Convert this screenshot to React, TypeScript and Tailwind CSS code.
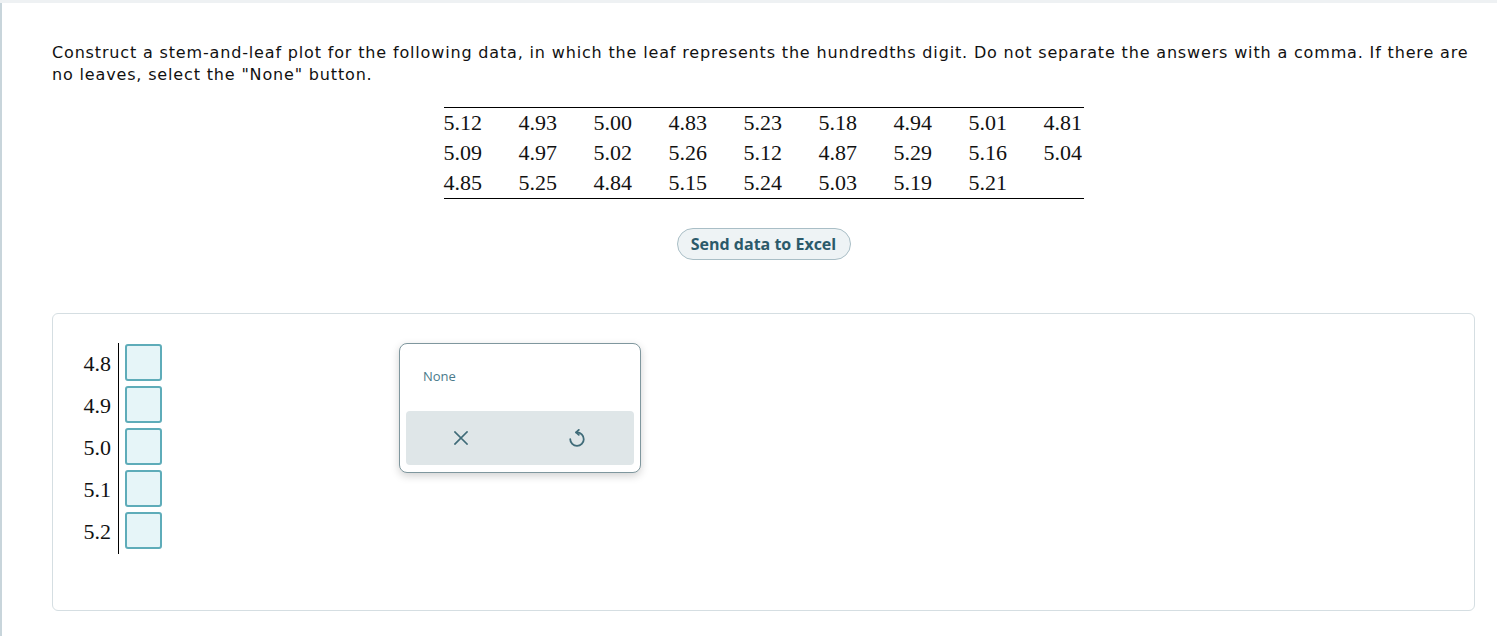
import React from 'react';

const data = [
  ['5.12', '4.93', '5.00', '4.83', '5.23', '5.18', '4.94', '5.01', '4.81'],
  ['5.09', '4.97', '5.02', '5.26', '5.12', '4.87', '5.29', '5.16', '5.04'],
  ['4.85', '5.25', '4.84', '5.15', '5.24', '5.03', '5.19', '5.21', ''],
];

const stems = ['4.8', '4.9', '5.0', '5.1', '5.2'];

const App = () => {
  return (
    <div className="min-h-[636px] bg-white">
      {/* top strip */}
      <div className="h-[3px] bg-[#eef1f3]" />
      <div className="border-l-2 border-[#c8d5db] min-h-[633px] pl-[50px] pr-[22px] pt-[39px]">
        <p className="font-['DejaVu_Sans',sans-serif] text-[16px] leading-[22px] tracking-[0.84px] text-[#111]">
          Construct a stem-and-leaf plot for the following data, in which the leaf represents the hundredths digit. Do not
          separate the answers with a comma. If there are no leaves, select the "None" button.
        </p>

        {/* data table */}
        <div className="flex justify-center mt-[21px]">
          <table className="border-y border-black font-['Liberation_Serif',serif] text-[22px] text-[#111]">
            <tbody>
              {data.map((row, i) => (
                <tr key={i} className="h-[30px]">
                  {row.map((v, j) => (
                    <td key={j} className={`p-0 leading-[30px] ${j < row.length - 1 ? 'w-[75px]' : 'w-[40px]'}`}>
                      {v}
                    </td>
                  ))}
                </tr>
              ))}
            </tbody>
          </table>
        </div>

        <div className="flex justify-center mt-[29px]">
          <button className="h-[32px] w-[174px] rounded-full border border-[#a9bec6] bg-[#eef3f5] font-['Open_Sans',sans-serif] font-bold text-[16px] text-[#2b5a6a]">
            Send data to Excel
          </button>
        </div>

        {/* answer area */}
        <div className="mt-[53px] h-[298px] rounded-[6px] border border-[#d5dee2] pt-[29px] pl-[30px]">
          <div className="flex items-start">
            <div className="w-[35px] pt-[2px] pr-[7px] text-right font-['Liberation_Serif',serif] text-[22px] text-[#111]">
              {stems.map((s) => (
                <div key={s} className="h-[42px] leading-[38px]">
                  {s}
                </div>
              ))}
            </div>
            <div className="border-l border-black pl-[6px] pt-[1px]">
              {stems.map((s) => (
                <div key={s} className="h-[42px]">
                  <div className="h-[37px] w-[37px] rounded-[3px] border-2 border-[#5eacb9] bg-[#e6f5f8]" />
                </div>
              ))}
            </div>

            {/* none palette */}
            <div className="ml-[237px] w-[242px] rounded-[8px] border border-[#7f979e] bg-white shadow-[0_3px_8px_rgba(0,0,0,0.18)] px-[6px] pb-[7px]">
              <div className="h-[67px] pl-[17px] pt-[23px] font-['Open_Sans',sans-serif] text-[13px] leading-[18px] text-[#4a7a8a]">
                None
              </div>
              <div className="grid h-[54px] grid-cols-2 rounded-[4px] bg-[#dfe6e8]">
                <div className="flex items-center justify-center pr-[4px]">
                  <svg width="14" height="14" viewBox="0 0 14 14" fill="none" stroke="#3f6b78" strokeWidth="1.7" strokeLinecap="square">
                    <path d="M1 1 L13 13 M13 1 L1 13" />
                  </svg>
                </div>
                <div className="flex items-center justify-center">
                  <svg width="18" height="18" viewBox="0 0 16 16" fill="none" stroke="#3f6b78" strokeWidth="1.6" strokeLinecap="round" strokeLinejoin="round">
                    <path d="M7.2 3 H8 A6 6 0 1 1 2 9" />
                    <path d="M9.6 0.8 L7.2 3 L9.6 5.2" />
                  </svg>
                </div>
              </div>
            </div>
          </div>
        </div>
      </div>
    </div>
  );
};

export default App;
